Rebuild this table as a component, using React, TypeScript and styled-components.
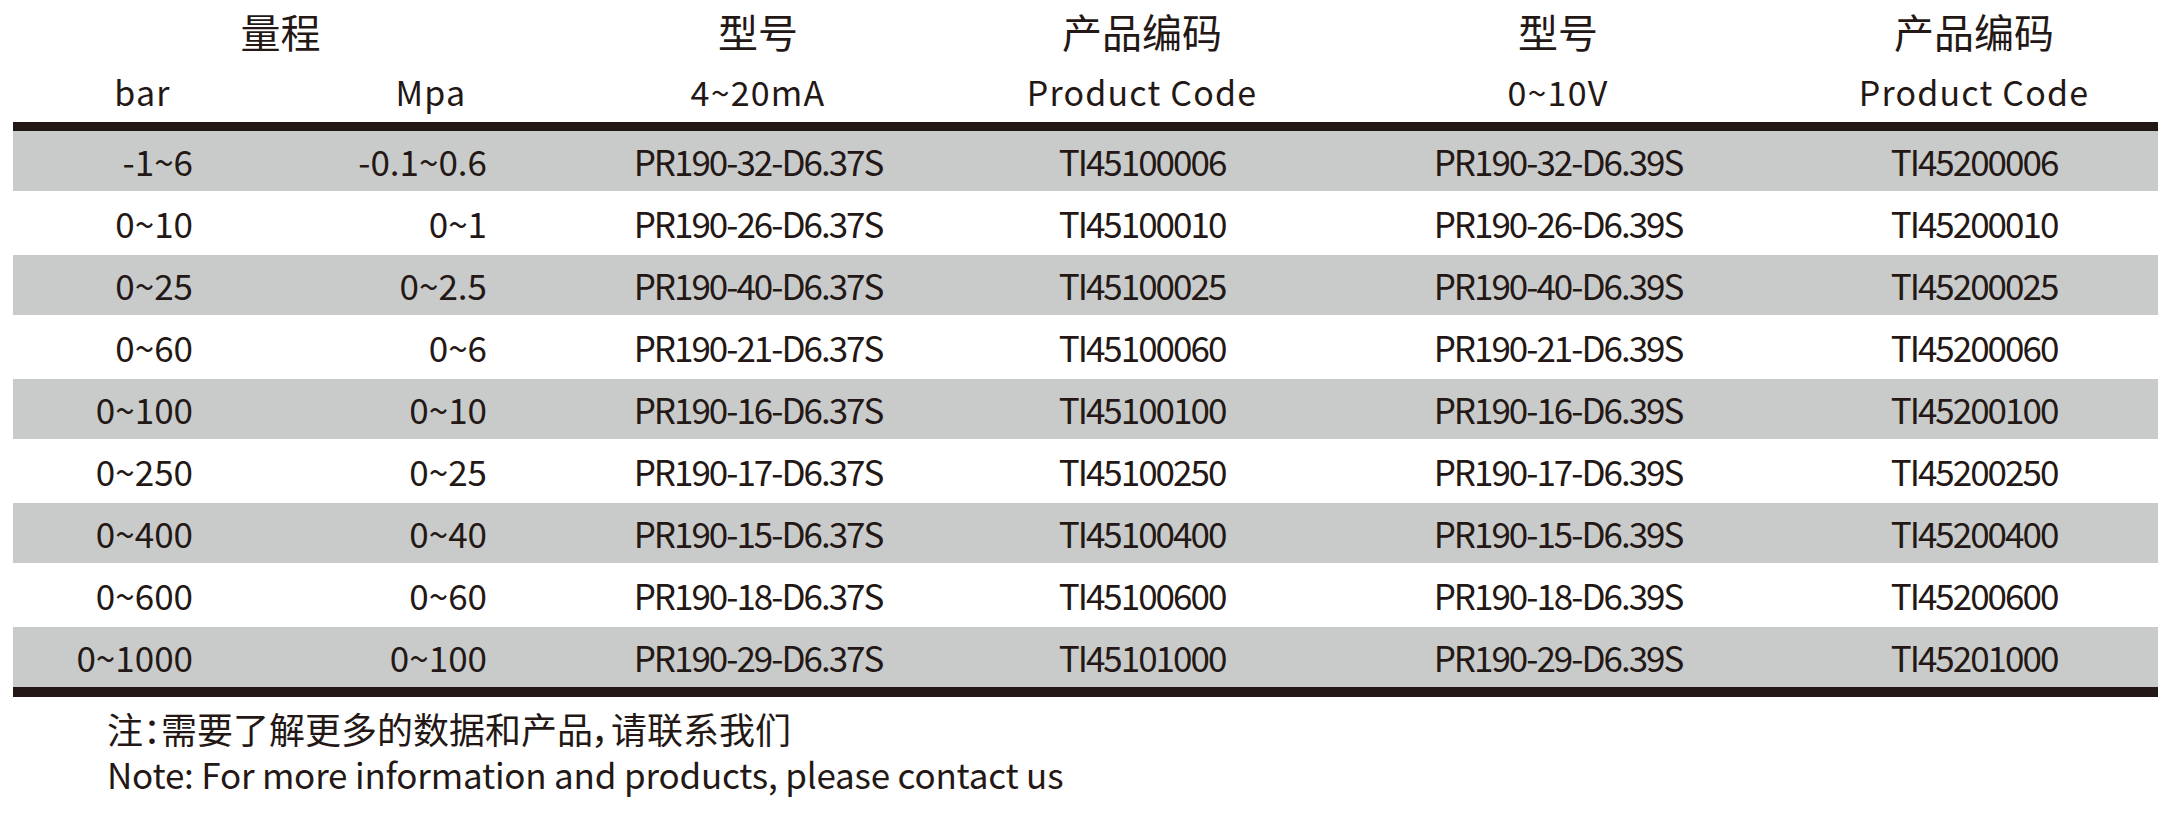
import * as React from 'react';
import styled, { createGlobalStyle } from 'styled-components';

const GlobalStyle = createGlobalStyle`
  html, body {
    margin: 0;
    padding: 0;
    background: #ffffff;
  }
  body {
    font-family: "Noto Sans CJK SC", "Noto Sans", sans-serif;
    color: #231815;
  }
`;

const Page = styled.div`
  width: 2176px;
  height: 816px;
  padding-left: 13px;
  box-sizing: border-box;
`;

const Table = styled.div`
  width: 2145px;
`;

const Grid = styled.div<{ $height: number; $shade?: boolean }>`
  display: grid;
  grid-template-columns: 259px 318px 336px 432px 400px 400px;
  height: ${(p) => p.$height}px;
  line-height: ${(p) => p.$height}px;
  background: ${(p) => (p.$shade ? '#c9caca' : 'transparent')};
`;

const TitleCell = styled.div<{ $span?: number; $shift?: number }>`
  grid-column: span ${(p) => p.$span || 1};
  text-align: center;
  font-size: 40px;
  padding-left: ${(p) => (p.$shift && p.$shift > 0 ? p.$shift : 0)}px;
  padding-right: ${(p) => (p.$shift && p.$shift < 0 ? -p.$shift : 0)}px;
  white-space: nowrap;
`;

const UnitCell = styled.div<{ $shift?: number }>`
  text-align: center;
  font-size: 34px;
  letter-spacing: 1.2px;
  padding-left: ${(p) => (p.$shift && p.$shift > 0 ? p.$shift : 0)}px;
  white-space: nowrap;
`;

const DataCell = styled.div<{ $align?: 'right' | 'center'; $pad?: number; $tight?: boolean }>`
  font-size: 35px;
  letter-spacing: ${(p) => (p.$tight ? -2 : 0)}px;
  text-align: ${(p) => p.$align || 'center'};
  padding-right: ${(p) => (p.$align === 'right' ? p.$pad || 0 : 0)}px;
  padding-left: ${(p) => (p.$align !== 'right' ? p.$pad || 0 : 0)}px;
  white-space: nowrap;
`;

const Body = styled.div`
  border-top: 9px solid #231815;
  border-bottom: 10px solid #231815;
`;

const Note = styled.div`
  margin-top: 9px;
  padding-left: 94px;
  font-size: 35px;
  line-height: 45px;
`;

const NoteCn = styled.div`
  font-size: 36px;
  font-feature-settings: "palt";
`;

const NoteEn = styled.div`
  letter-spacing: -0.2px;
`;

const rows = [
  ['-1~6', '-0.1~0.6', '32', 'TI45100006', 'TI45200006'],
  ['0~10', '0~1', '26', 'TI45100010', 'TI45200010'],
  ['0~25', '0~2.5', '40', 'TI45100025', 'TI45200025'],
  ['0~60', '0~6', '21', 'TI45100060', 'TI45200060'],
  ['0~100', '0~10', '16', 'TI45100100', 'TI45200100'],
  ['0~250', '0~25', '17', 'TI45100250', 'TI45200250'],
  ['0~400', '0~40', '15', 'TI45100400', 'TI45200400'],
  ['0~600', '0~60', '18', 'TI45100600', 'TI45200600'],
  ['0~1000', '0~100', '29', 'TI45101000', 'TI45201000'],
];

export default function App() {
  return (
    <>
      <GlobalStyle />
      <Page>
        <Table>
          <Grid $height={62}>
            <TitleCell $span={2} $shift={-42}>量程</TitleCell>
            <TitleCell>型号</TitleCell>
            <TitleCell>产品编码</TitleCell>
            <TitleCell>型号</TitleCell>
            <TitleCell $shift={32}>产品编码</TitleCell>
          </Grid>
          <Grid $height={60}>
            <UnitCell>bar</UnitCell>
            <UnitCell>Mpa</UnitCell>
            <UnitCell>4~20mA</UnitCell>
            <UnitCell>Product Code</UnitCell>
            <UnitCell>0~10V</UnitCell>
            <UnitCell $shift={32}>Product Code</UnitCell>
          </Grid>
          <Body>
            {rows.map((r, i) => (
              <Grid key={i} $height={i % 2 === 0 ? 60 : 64} $shade={i % 2 === 0}>
                <DataCell $align="right" $pad={79}>{r[0]}</DataCell>
                <DataCell $align="right" $pad={103}>{r[1]}</DataCell>
                <DataCell $tight>{`PR190-${r[2]}-D6.37S`}</DataCell>
                <DataCell $tight>{r[3]}</DataCell>
                <DataCell $tight>{`PR190-${r[2]}-D6.39S`}</DataCell>
                <DataCell $tight $pad={32}>{r[4]}</DataCell>
              </Grid>
            ))}
          </Body>
        </Table>
        <Note>
          <NoteCn>注：需要了解更多的数据和产品，请联系我们</NoteCn>
          <NoteEn>Note: For more information and products, please contact us</NoteEn>
        </Note>
      </Page>
    </>
  );
}
